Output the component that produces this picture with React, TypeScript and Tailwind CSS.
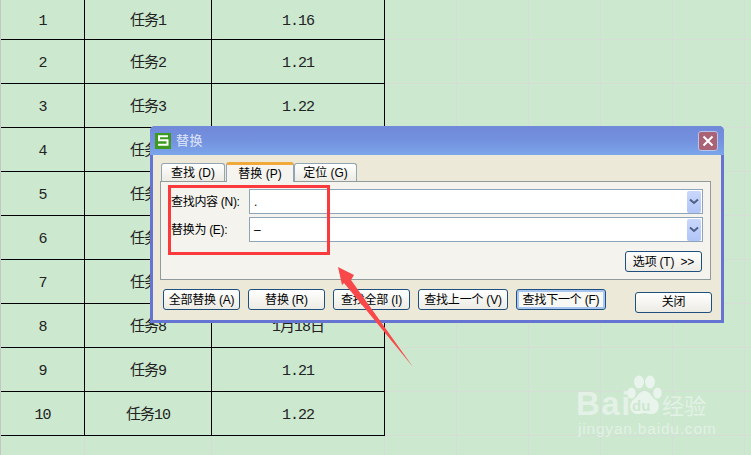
import React from 'react';

const rows = [
  ['1', '任务1', '1.16'],
  ['2', '任务2', '1.21'],
  ['3', '任务3', '1.22'],
  ['4', '任务4', '1.16'],
  ['5', '任务5', '1.21'],
  ['6', '任务6', '1.22'],
  ['7', '任务7', '1.16'],
  ['8', '任务8', '1月18日'],
  ['9', '任务9', '1.21'],
  ['10', '任务10', '1.22'],
];

const sheetFont = "font-['Liberation_Mono','Noto_Sans_CJK_SC',monospace]";
const dialogFont = "font-['Liberation_Sans','Noto_Sans_CJK_SC',sans-serif]";

const LightCells = () => (
  <>
    <div className="border-r border-b border-[#d6dcd6]" />
    <div className="border-r border-b border-[#d6dcd6]" />
    <div className="border-r border-b border-[#d6dcd6]" />
    <div className="border-r border-b border-[#d6dcd6]" />
    <div className="border-r border-b border-[#d6dcd6]" />
    <div className="border-b border-[#d6dcd6]" />
  </>
);

const Cell = ({ children }: { children: React.ReactNode }) => (
  <div className="flex items-center justify-center border-r border-b border-black pt-[3px] text-[15px] leading-none tracking-[-1px] text-[#222]">
    {children}
  </div>
);

const Sheet = () => (
  <div className="grid w-[751px] grid-cols-[84px_127px_173px_72px_72px_72px_72px_72px_6px] grid-rows-[40px_repeat(10,44px)_19px] border-l border-[#c4c8c4]">
    {rows.map((r) => (
      <React.Fragment key={r[0]}>
        <Cell>{r[0]}</Cell>
        <Cell>{r[1]}</Cell>
        <Cell>{r[2]}</Cell>
        <LightCells />
      </React.Fragment>
    ))}
    <div className="border-r border-[#d6dcd6]" />
    <div className="border-r border-[#d6dcd6]" />
    <div className="border-r border-[#d6dcd6]" />
    <LightCells />
  </div>
);

const Chevron = () => (
  <div className="flex h-[22px] w-[14px] items-center justify-center rounded-[2px] bg-gradient-to-b from-[#c9d7fb] to-[#b0c5f7]">
    <svg width="10" height="7" viewBox="0 0 10 7">
      <path d="M1 1.5 L5 5 L9 1.5" fill="none" stroke="#4d6185" strokeWidth="2" />
    </svg>
  </div>
);

const Field = ({ value }: { value: string }) => (
  <div className="flex h-[25px] w-[454px] items-center justify-between border border-[#8fa4b8] bg-white pl-[4px] pr-[1px] text-[12px] text-black">
    <span>{value}</span>
    <Chevron />
  </div>
);

const Btn = ({ w, label, active }: { w: string; label: string; active?: boolean }) => (
  <button
    className={`${w} h-[21px] shrink-0 whitespace-pre rounded-[3px] border border-[#1f4f7f] text-[12px] leading-none tracking-[-0.2px] text-black ${
      active
        ? 'bg-[#f8f8f4] shadow-[inset_0_0_0_2px_#a9c6f0]'
        : 'bg-gradient-to-b from-white to-[#ecebe4]'
    }`}
  >
    {label}
  </button>
);

const Dialog = () => (
  <div className={`absolute left-[150px] top-[126px] flex h-[197px] w-[574px] flex-col overflow-hidden rounded-t-[5px] bg-[#6573d2] px-[3px] pb-[3px] ${dialogFont}`}>
    <div className="-mx-[3px] flex h-[29px] shrink-0 items-center justify-between bg-gradient-to-b from-[#7089d9] via-[#7391de] to-[#7ba6ea] pl-[5px] pr-[6px]">
      <div className="flex items-center gap-[5px]">
        <div className="flex h-[16px] w-[16px] items-center justify-center bg-[#3c9a1c]">
          <svg width="12" height="11" viewBox="0 0 12 11">
            <path d="M11 1.2 H2 V5.2 H10.5 V9.8 H1" fill="none" stroke="#fff" strokeWidth="2" />
          </svg>
        </div>
        <span className="text-[13px] font-medium tracking-[0.5px] text-[#d3ddf5]">替换</span>
      </div>
      <div className="flex h-[20px] w-[20px] items-center justify-center rounded-[3px] border border-[#b9c4ea] bg-[#a96276]">
        <svg width="12" height="12" viewBox="0 0 12 12">
          <path d="M1.5 1.5 L10.5 10.5 M10.5 1.5 L1.5 10.5" stroke="#fff" strokeWidth="2" />
        </svg>
      </div>
    </div>

    <div className="flex min-h-0 flex-1 flex-col bg-[#ece9d8] pl-[7px] pr-[10px] pt-[8px]">
      <div className="flex h-[18px] items-end pl-[1px] text-[12px] text-black">
        <div className="flex h-[18px] w-[64px] items-center justify-center whitespace-pre rounded-t-[3px] border border-b-0 border-[#93a4b2] bg-gradient-to-b from-white to-[#ecebe4]">
          查找 (D)
        </div>
        <div className="z-10 -mb-[1px] ml-[1px] flex h-[20px] w-[68px] items-center justify-center whitespace-pre rounded-t-[3px] border-x border-t-[3px] border-x-[#93a4b2] border-t-[#f2a93b] bg-[#f5f4ef]">
          替换 (P)
        </div>
        <div className="flex h-[18px] w-[63px] items-center justify-center whitespace-pre rounded-t-[3px] border border-b-0 border-[#93a4b2] bg-gradient-to-b from-white to-[#ecebe4]">
          定位 (G)
        </div>
      </div>

      <div className="flex h-[99px] flex-col border border-[#919b9c] bg-[#f4f3ee] pl-[10px] pt-[7px]">
        <div className="flex items-center">
          <span className="w-[78px] whitespace-pre text-[12px] tracking-[-0.3px] text-black">查找内容 (N):</span>
          <Field value="." />
        </div>
        <div className="mt-[3px] flex items-center">
          <span className="w-[78px] whitespace-pre text-[12px] tracking-[-0.3px] text-black">替换为 (E):</span>
          <Field value="–" />
        </div>
        <div className="mt-[9px] flex justify-end pr-[8px]">
          <Btn w="w-[77px]" label="选项 (T)  >>" />
        </div>
      </div>

      <div className="flex pl-[3px] pt-[9px]">
        <div className="flex gap-[8px]">
          <Btn w="w-[77px]" label="全部替换 (A)" />
          <Btn w="w-[77px]" label="替换 (R)" />
          <Btn w="w-[77px]" label="查找全部 (I)" />
          <Btn w="w-[90px]" label="查找上一个 (V)" />
          <Btn w="w-[90px]" label="查找下一个 (F)" active />
        </div>
        <div className="ml-[29px]">
          <Btn w="w-[77px]" label="关闭" />
        </div>
      </div>
    </div>
  </div>
);

const Watermark = () => (
  <div className="pointer-events-none absolute left-[576px] top-[375px] h-[62px] w-[135px] text-[#e9f4ec]">
    <span className="absolute left-0 top-[15px] h-[28px] font-['Liberation_Sans',sans-serif] text-[33px] font-bold leading-[28px] tracking-[1.5px] opacity-80">
      Bai
    </span>
    <svg className="absolute left-[51px] top-0" width="35" height="44" viewBox="0 0 35 44">
      <ellipse cx="12" cy="7" rx="5" ry="6.5" fill="currentColor" />
      <ellipse cx="23" cy="7" rx="5" ry="6.5" fill="currentColor" />
      <ellipse cx="4.5" cy="18" rx="4.2" ry="5.5" fill="currentColor" />
      <ellipse cx="30.5" cy="18" rx="4.2" ry="5.5" fill="currentColor" />
      <path d="M17.5 16 C23 16 24 22 29 25 C34 29 32 38 26 39 C22 39.500 20 38 17.5 38 C15 38 13 39.500 9 39 C3 38 1 29 6 25 C11 22 12 16 17.5 16 Z" fill="currentColor" />
    </svg>
    <span className="absolute left-[56px] top-[23px] font-['Liberation_Sans',sans-serif] text-[15px] font-bold leading-none text-[#cce8cf]">
      du
    </span>
    <span className="absolute left-[86px] top-[18px] font-['Noto_Sans_CJK_SC',sans-serif] text-[22px] leading-none opacity-80">
      经验
    </span>
    <span className="absolute left-[2px] top-[46px] whitespace-nowrap font-['Liberation_Sans',sans-serif] text-[15.500px] leading-none tracking-[0.800px] opacity-80">
      jingyan.baidu.com
    </span>
  </div>
);

const Markup = () => (
  <>
    <div className="absolute left-[168px] top-[185px] h-[70px] w-[162px] border-[3px] border-[#fb3a3e]" />
    <svg className="absolute left-0 top-0" width="751" height="455" viewBox="0 0 751 455">
      <polygon points="338,267 354,275 351,280 413,367 344,283 342,285" fill="#f9484a" />
    </svg>
  </>
);

export default function App() {
  return (
    <div className={`relative h-[455px] w-[751px] overflow-hidden bg-[#cce8cf] ${sheetFont}`}>
      <Sheet />
      <Watermark />
      <Dialog />
      <Markup />
    </div>
  );
}
